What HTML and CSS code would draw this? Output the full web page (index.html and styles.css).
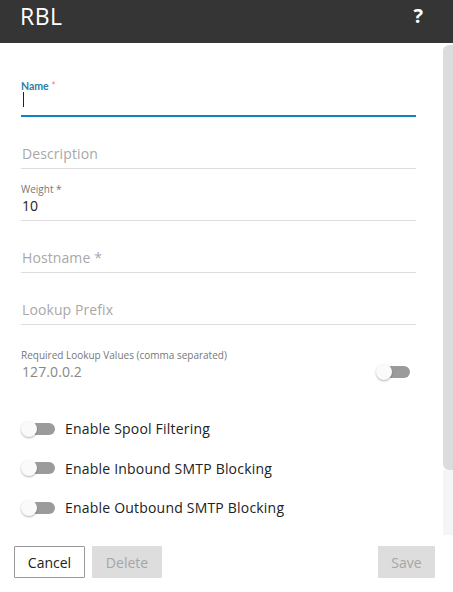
FILE: index.html
```html
<!DOCTYPE html>
<html>
<head>
<meta charset="utf-8">
<link rel="stylesheet" href="styles.css">
</head>
<body>
<div class="dialog">
  <header class="top">
    <span class="title">RBL</span>
    <span class="help">?</span>
  </header>
  <div class="main">
    <div class="form">
      <div class="field focused">
        <label class="lbl lbl-focus">Name <span class="req">*</span></label>
        <div class="value"><span class="caret"></span></div>
      </div>
      <div class="field">
        <div class="value placeholder">Description</div>
      </div>
      <div class="field">
        <label class="lbl">Weight *</label>
        <div class="value">10</div>
      </div>
      <div class="field">
        <div class="value placeholder">Hostname *</div>
      </div>
      <div class="field">
        <div class="value placeholder">Lookup Prefix</div>
      </div>
      <div class="field plain">
        <label class="lbl">Required Lookup Values (comma separated)</label>
        <div class="value-row">
          <div class="value muted">127.0.0.2</div>
          <span class="toggle"></span>
        </div>
      </div>
      <div class="switches">
        <div class="switch-row"><span class="toggle"></span><span class="switch-text">Enable Spool Filtering</span></div>
        <div class="switch-row"><span class="toggle"></span><span class="switch-text">Enable Inbound SMTP Blocking</span></div>
        <div class="switch-row"><span class="toggle"></span><span class="switch-text">Enable Outbound SMTP Blocking</span></div>
      </div>
    </div>
    <div class="scrollbar">
      <div class="thumb"></div>
      <div class="track"></div>
    </div>
  </div>
  <footer class="actions">
    <button class="btn btn-cancel">Cancel</button>
    <button class="btn btn-disabled">Delete</button>
    <span class="spacer"></span>
    <button class="btn btn-disabled btn-save">Save</button>
  </footer>
</div>
</body>
</html>
```

FILE: styles.css
```css
* { box-sizing: border-box; }
html, body { margin: 0; padding: 0; background: #fff; }
body { font-family: "Open Sans", "DejaVu Sans", sans-serif; color: #222; }
.dialog { width: 453px; height: 592px; display: flex; flex-direction: column; }
.top {
  height: 43px; background: #353535; color: #fff;
  display: flex; align-items: flex-start; justify-content: space-between;
  padding: 0 30px 0 20px;
}
.title { font-size: 23px; line-height: 31px; letter-spacing: 0.5px; padding-top: 1px; }
.help { font-size: 20px; line-height: 28px; font-weight: bold; padding-top: 2px; }
.main { display: flex; height: 492px; padding-top: 2px; }
.form { flex: 1; padding: 36px 27px 0 21px; }
.field { border-bottom: 1px solid #ddd; height: 52px; display: flex; flex-direction: column; justify-content: flex-end; padding-bottom: 5px; }
.field.focused { border-bottom: 2px solid #0a85c2; height: 36px; padding-bottom: 6px; }
.field.plain { border-bottom: none; height: 56px; padding-bottom: 0; }
.lbl { font-size: 10px; color: #777; line-height: 13px; }
.lbl-focus { color: #2b7fa8; font-family: Lato, sans-serif; font-weight: bold; font-size: 10.5px; margin-bottom: -3px; }
.req { color: #f08a80; font-weight: normal; }
.value { font-size: 14px; line-height: 19px; height: 19px; padding-left: 1px; letter-spacing: 0.1px; }
.placeholder { color: #a8a8a8; }
.muted { color: #888; }
.caret { display: inline-block; width: 1px; height: 15px; background: #222; vertical-align: -2px; margin-left: 1px; }
.value-row { display: flex; justify-content: space-between; align-items: center; padding-right: 6px; }
.toggle { position: relative; display: inline-block; width: 34px; height: 16px; flex: none; }
.toggle::before { content: ""; position: absolute; left: 7px; right: 0; top: 2px; height: 12px; border-radius: 6px; background: #9b9b9b; }
.toggle::after { content: ""; position: absolute; left: 0; top: 0; width: 16px; height: 16px; border-radius: 50%; background: #fafafa; box-shadow: 0 1px 2px rgba(0,0,0,0.3); }
.switches { display: flex; flex-direction: column; gap: 18.5px; padding-top: 37px; }
.switch-row { display: flex; align-items: center; gap: 10px; height: 21px; }
.switch-text { font-size: 14px; color: #222; letter-spacing: 0.2px; }
.scrollbar { width: 10px; display: flex; flex-direction: column; }
.thumb { height: 426px; background: #dcdcdc; border-radius: 6px 0 0 6px; }
.track { height: 65px; background: #f5f5f5; }
.actions { display: flex; padding: 11px 18px 0 14px; gap: 7px; align-items: flex-start; }
.spacer { flex: 1; }
.btn { font-family: "Open Sans", "DejaVu Sans", sans-serif; font-size: 14px; height: 32px; padding: 0 10px; border-radius: 1px; }
.btn-cancel { background: #fff; border: 1px solid #999; color: #222; width: 71px; }
.btn-disabled { background: #ddd; border: none; color: #a6a6a6; width: 70px; }
.btn-save { width: 57px; }
```
